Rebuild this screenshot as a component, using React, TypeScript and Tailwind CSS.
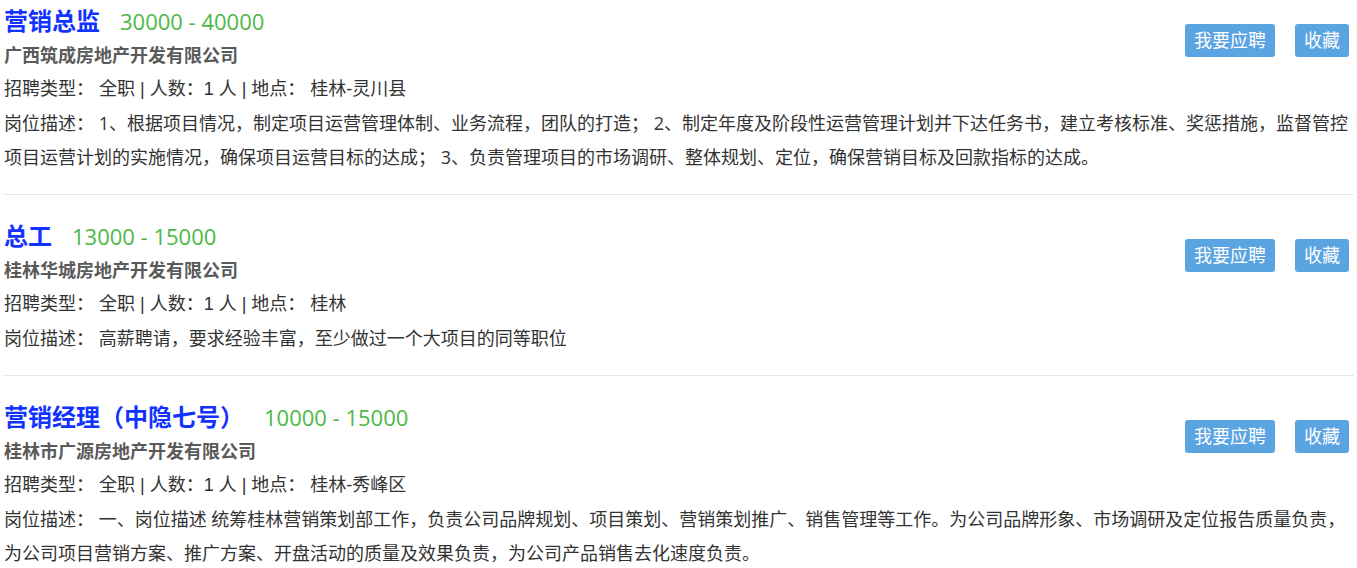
const jobs = [
  {
    title: "营销总监",
    salary: "30000 - 40000",
    company: "广西筑成房地产开发有限公司",
    info: "招聘类型： 全职 | 人数：1 人 | 地点： 桂林-灵川县",
    desc: "岗位描述： 1、根据项目情况，制定项目运营管理体制、业务流程，团队的打造； 2、制定年度及阶段性运营管理计划并下达任务书，建立考核标准、奖惩措施，监督管控项目运营计划的实施情况，确保项目运营目标的达成； 3、负责管理项目的市场调研、整体规划、定位，确保营销目标及回款指标的达成。",
  },
  {
    title: "总工",
    salary: "13000 - 15000",
    company: "桂林华城房地产开发有限公司",
    info: "招聘类型： 全职 | 人数：1 人 | 地点： 桂林",
    desc: "岗位描述： 高薪聘请，要求经验丰富，至少做过一个大项目的同等职位",
  },
  {
    title: "营销经理（中隐七号）",
    salary: "10000 - 15000",
    company: "桂林市广源房地产开发有限公司",
    info: "招聘类型： 全职 | 人数：1 人 | 地点： 桂林-秀峰区",
    desc: "岗位描述： 一、岗位描述 统筹桂林营销策划部工作，负责公司品牌规划、项目策划、营销策划推广、销售管理等工作。为公司品牌形象、市场调研及定位报告质量负责，为公司项目营销方案、推广方案、开盘活动的质量及效果负责，为公司产品销售去化速度负责。",
  },
];

export default function App() {
  return (
    <div className="w-full bg-white pl-1 pr-1 font-['Open_Sans','Noto_Sans_CJK_SC',sans-serif] text-[#333]">
      {jobs.map((job, i) => (
        <div
          key={job.title}
          className={`border-b border-dotted border-[#cfcfcf] pb-5 ${i === 0 ? "pt-1" : "pt-6"}`}
        >
          {/* Actions */}
          <div className="float-right mr-1 mt-5 flex gap-5">
            <button className="h-[33px] rounded-[3px] bg-[#5ba4e2] px-[9px] text-[18px] leading-[33px] text-white">
              我要应聘
            </button>
            <button className="h-[33px] rounded-[3px] bg-[#5ba4e2] px-[9px] text-[18px] leading-[33px] text-white">
              收藏
            </button>
          </div>

          <div className="flex h-[34px] items-center gap-5">
            <span className="text-[24px] font-bold leading-[34px] text-[#1232ff]">
              {job.title}
            </span>
            <span className="text-[22px] leading-[34px] text-[#4db845]">
              {job.salary}
            </span>
          </div>
          <div className="text-[18px] font-bold leading-[34px] text-[#5a5a5a]">
            {job.company}
          </div>
          <div className="font-['Liberation_Sans','Noto_Sans_CJK_SC',sans-serif] text-[18px] leading-[34px]">
            {job.info}
          </div>
          <div className="text-[18px] leading-[34px]">{job.desc}</div>
        </div>
      ))}
    </div>
  );
}
